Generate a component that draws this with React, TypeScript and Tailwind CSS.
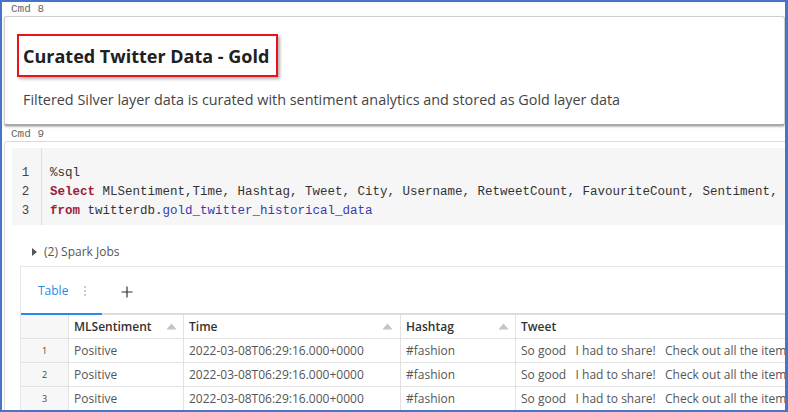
import React from 'react';

const mono = "font-['Liberation_Mono','DejaVu_Sans_Mono',monospace]";

const SortArrow: React.FC = () => (
  <svg width="11" height="7" viewBox="0 0 11 7" className="shrink-0">
    <path d="M5.5 0.5 L10.5 6.5 L0.5 6.5 Z" fill="#c4c4c4" />
  </svg>
);

const rows = [1, 2, 3];

const App: React.FC = () => {
  return (
    <div className="w-[788px] h-[412px] overflow-hidden border-2 border-[#4674c9] border-r-[3px] bg-white font-['Open_Sans','Noto_Sans',sans-serif] text-[#333]">
      {/* Cmd 8 */}
      <div className={`h-[14px] pl-[9px] text-[11px] leading-[14px] text-[#666] ${mono}`}>Cmd 8</div>
      <div className="ml-[2px] h-[110px] rounded-[3px] border border-[#cfcfcf] border-b-[2px] border-b-[#a9a9a9] shadow-[0_1px_2px_rgba(0,0,0,0.25)] bg-white">
        <div className="pl-[12px] pt-[17px]">
          <div className="w-[261px] h-[43px] border-2 border-[#e8141c] shadow-[2px_2px_3px_rgba(0,0,0,0.3)] flex items-center pl-[4px]">
            <span className="text-[18px] font-bold text-[#212121] leading-none whitespace-nowrap">Curated Twitter Data - Gold</span>
          </div>
        </div>
        <div className="pl-[18px] pt-[13px] text-[14.4px] leading-[20px] text-[#444] whitespace-nowrap">
          Filtered Silver layer data is curated with sentiment analytics and stored as Gold layer data
        </div>
      </div>

      {/* Cmd 9 */}
      <div className={`h-[15px] pl-[9px] pt-[1px] text-[11px] leading-[14px] text-[#666] ${mono}`}>Cmd 9</div>
      <div className="ml-[2px] h-[280px] border-t border-l border-[#dcdcdc] rounded-tl-[3px] bg-white">
        <div className="ml-[7px] mt-[6px] h-[77px] bg-[#f6f6f6] flex overflow-hidden">
          <div className={`w-[30px] shrink-0 border-r border-[#dedede] pt-[16px] text-[12.5px] leading-[19px] text-[#444] ${mono} flex flex-col items-center pr-[2px]`}>
            <span>1</span>
            <span>2</span>
            <span>3</span>
          </div>
          <div className={`pl-[8px] pt-[16px] text-[12.5px] leading-[19px] text-[#333] whitespace-pre ${mono}`}>
            <div>%sql</div>
            <div>
              <span className="font-bold text-[#9b1c3c]">Select</span> MLSentiment,Time, Hashtag, Tweet, City, Username, RetweetCount, FavouriteCount, Sentiment, Source
            </div>
            <div>
              <span className="font-bold text-[#9b1c3c]">from</span> twitterdb.<span className="text-[#3a3ab0]">gold_twitter_historical_data</span>
            </div>
          </div>
        </div>

        <div className="h-[41px] flex items-center pl-[27px] pt-[12px]">
          <svg width="5" height="8" viewBox="0 0 5 8" className="mr-[7px]">
            <path d="M0 0 L5 4 L0 8 Z" fill="#555" />
          </svg>
          <span className="text-[12px] text-[#555]">(2) Spark Jobs</span>
        </div>

        <div className="ml-[15px] border-t border-l border-[#e6e6e6]">
          {/* tabs */}
          <div className="h-[48px] flex items-end">
            <div className="w-[81px] h-[48px] border-b-2 border-[#2b8ae6] flex items-center pt-[2px]">
              <span className="pl-[17px] text-[12px] text-[#2b8ae6]">Table</span>
              <span className="ml-[16px] flex flex-col gap-[2px]">
                <span className="w-[2px] h-[2px] bg-[#bbb] rounded-full" />
                <span className="w-[2px] h-[2px] bg-[#bbb] rounded-full" />
                <span className="w-[2px] h-[2px] bg-[#bbb] rounded-full" />
              </span>
            </div>
            <div className="h-[48px] flex items-center pl-[19px] pt-[2px]">
              <svg width="12" height="12" viewBox="0 0 12 12">
                <path d="M6 0.5 V11.5 M0.5 6 H11.5" stroke="#333" strokeWidth="1.2" />
              </svg>
            </div>
          </div>

          {/* table */}
          <div className="border-t-2 border-[#dcdcdc] -mt-[2px]">
            <div className="flex h-[24px] text-[12px] font-semibold text-[#333] border-b border-[#e2e2e2]">
              <div className="w-[48px] border-r border-[#e2e2e2] bg-[#f7f7f7]" />
              <div className="w-[115px] border-r border-[#e2e2e2] flex items-center justify-between pl-[5px] pr-[6px]">
                <span>MLSentiment</span>
                <SortArrow />
              </div>
              <div className="w-[217px] border-r border-[#e2e2e2] flex items-center justify-between pl-[5px] pr-[7px]">
                <span>Time</span>
                <SortArrow />
              </div>
              <div className="w-[115px] border-r border-[#e2e2e2] flex items-center justify-between pl-[5px] pr-[6px]">
                <span>Hashtag</span>
                <SortArrow />
              </div>
              <div className="flex-1 flex items-center pl-[5px]">
                <span>Tweet</span>
              </div>
            </div>
            {rows.map((n) => (
              <div key={n} className="flex h-[24px] text-[12px] text-[#555] border-b border-[#e2e2e2]">
                <div className="w-[48px] border-r border-[#e2e2e2] bg-[#f7f7f7] flex items-center justify-center text-[9px] text-[#444]">{n}</div>
                <div className="w-[115px] border-r border-[#e2e2e2] flex items-center pl-[5px]">Positive</div>
                <div className="w-[217px] border-r border-[#e2e2e2] flex items-center pl-[5px]">2022-03-08T06:29:16.000+0000</div>
                <div className="w-[115px] border-r border-[#e2e2e2] flex items-center pl-[5px]">#fashion</div>
                <div className="flex-1 flex items-center pl-[5px] whitespace-pre overflow-hidden">So good   I had to share!   Check out all the item</div>
              </div>
            ))}
          </div>
        </div>
      </div>
    </div>
  );
};

export default App;
